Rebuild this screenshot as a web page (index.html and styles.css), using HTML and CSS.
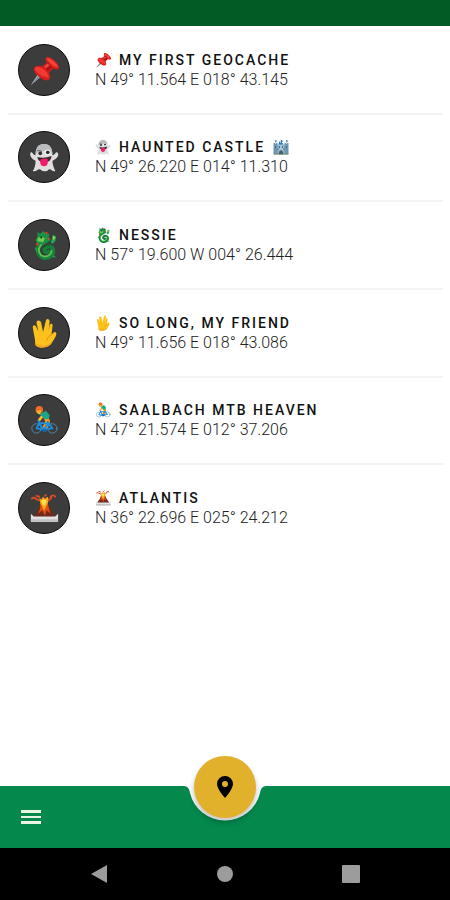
FILE: index.html
```html
<!DOCTYPE html>
<html lang="en">
<head>
<meta charset="utf-8">
<meta name="viewport" content="width=device-width, initial-scale=1">
<title>Geocaches</title>
<link rel="stylesheet" href="styles.css">
</head>
<body>
<svg class="sprite" aria-hidden="true">
    <symbol id="pin" viewBox="0 0 32 32">
        <path d="M10 20L13 23L2 32Z" fill="#b9c1c6"/>
        <path d="M11 21L13 23L2 32Z" fill="#7e888e"/>
        <path d="M5 15C6 11 11 11 14 12L19 8C17 5 17 2 20 2C24 2 32 9 32 13C32 16 29 16 26 14L21 19C23 22 23 26 20 27C15 28 5 20 5 15Z" fill="#d81f1c"/>
        <path d="M19 3C22 3 30 9 31 13C28 14 20 8 19 3Z" fill="#f4443a"/>
        <path d="M6 14C8 12 12 13 15 15C18 17 21 21 21 24C16 24 7 19 6 14Z" fill="#f03a32"/>
        <path d="M15 12L20 8L25 13L20 18C19 15 17 13 15 12Z" fill="#b31217"/>
        <path d="M16 12L20 9L22 11L18 14Z" fill="#ee4a40"/>
    </symbol>
    <symbol id="ghost" viewBox="0 0 32 32">
        <path d="M16 2C22 2 25 6 25 14C28 14 28 10 30 11C33 13 30 18 25 20C25 25 27 28 28 31C25 32 24 29 22 29C20 29 20 32 17 31C14 32 13 29 11 29C9 29 8 32 4 31C6 28 7 25 7 20C2 18 0 13 2 11C4 10 4 14 7 14C7 6 10 2 16 2Z" fill="#dedede"/>
        <path d="M16 2C22 2 25 6 25 13C21 8 12 8 7 13C7 6 10 2 16 2Z" fill="#b9bcbe"/>
        <ellipse cx="12" cy="12" rx="2" ry="2" fill="#303030"/>
        <ellipse cx="20" cy="11" rx="3" ry="3" fill="#fff"/>
        <circle cx="20" cy="11" r="2" fill="#303030"/>
        <path d="M9 9L14 10" stroke="#555" stroke-width="1"/>
        <path d="M9 16Q16 18 24 15C24 19 21 22 16 22C12 22 9 19 9 16Z" fill="#3b2830"/>
        <path d="M12 19Q16 17 20 18V22C20 27 12 27 12 22Z" fill="#f01d6e"/>
    </symbol>
    <symbol id="dragon" viewBox="0 0 32 32">
        <path d="M14 14C8 17 8 24 12 28C16 32 25 30 26 23C26 17 20 16 17 20C15 23 19 25 21 23" fill="none" stroke="#16803a" stroke-width="4" stroke-linecap="round"/>
        <path d="M14 15C9 19 10 24 13 27C17 30 24 27 24 22" fill="none" stroke="#57c24f" stroke-width="2" stroke-linecap="round"/>
        <path d="M9 7L9 2L12 4L15 1L18 4L22 4L21 8L23 11L20 13L15 16L9 14L7 11Z" fill="#159447"/>
        <path d="M9 9Q13 6 17 9L15 13L9 12Z" fill="#72c94d"/>
        <path d="M16 3L20 2L19 5ZM20 8L23 9L20 11ZM8 13L11 15L8 17Z" fill="#e3422e"/>
        <circle cx="13" cy="8" r="1" fill="#1d2b17"/>
        <path d="M23 13L25 8L26 5L29 7L28 12L25 15ZM9 20L6 18L8 24ZM26 27L29 29L25 29Z" fill="#23a351"/>
        <path d="M25 6L28 8L26 11Z" fill="#a2d860"/>
        <path d="M14 19L20 16L22 18" fill="none" stroke="#0c5c2a" stroke-width="1"/>
    </symbol>
    <symbol id="vulcan" viewBox="0 0 32 32">
        <path d="M6 21L4 10C4 7 7 7 8 10L10 14L8 5C8 2 12 2 13 5L15 15L18 3C19 0 22 1 22 4L21 13L22 8C23 5 26 6 25 9L24 18C26 15 28 14 29 16C30 18 26 24 24 27C21 32 10 33 7 29C6 26 7 24 6 21Z" fill="#fcc21b"/>
        <path d="M24 18Q20 19 19 24" fill="none" stroke="#e48c15" stroke-width="1" stroke-linecap="round"/>
        <path d="M7 27C12 31 20 30 25 25C22 33 10 33 7 29Z" fill="#f5a51c"/>
    </symbol>
    <symbol id="cyclist" viewBox="0 0 32 32">
        <g fill="none" stroke-linecap="round" stroke-linejoin="round">
            <circle cx="8" cy="25" r="5" stroke="#4f8db0" stroke-width="1"/>
            <circle cx="25" cy="25" r="5" stroke="#4f8db0" stroke-width="1"/>
            <path d="M18 13L20 18L17 24" stroke="#f79a1d" stroke-width="5"/>
            <path d="M14 12L11 16" stroke="#fbb52e" stroke-width="3"/>
            <path d="M8 25L11 19L21 20L15 26ZM20 18L25 25L16 26M10 17L15 26" stroke="#1c8ce0" stroke-width="2"/>
            <path d="M15 27H18" stroke="#1769aa" stroke-width="3"/>
        </g>
        <path d="M11 10L18 6L22 11L21 15L16 15L14 12Z" fill="#19a887"/>
        <circle cx="11" cy="5" r="4" fill="#ef6c22"/>
        <path d="M8 6L13 5L12 10L9 9Z" fill="#fbb02a"/>
    </symbol>
    <symbol id="volcano" viewBox="0 0 32 32">
        <path d="M12 11L20 11L23 17L29 26H4L10 17Z" fill="#6f2a1e"/>
        <path d="M12 11L20 11L21 16L23 22L19 18L17 24L14 18L10 22L12 16Z" fill="#e2520f"/>
        <path d="M11 5L13 7L15 4L17 6L20 4L21 7L20 11L18 15L16 19L14 14L12 11Z" fill="#ffa71b"/>
        <path d="M13 8L16 7L19 8L17 13H15Z" fill="#ffe34c"/>
        <path d="M3 6Q5 4 7 6L11 8M8 3L11 4M17 3L18 2M21 8L24 5M23 4Q26 1 28 4" fill="none" stroke="#d94a25" stroke-width="2" stroke-linecap="round"/>
        <path d="M2 22L5 25H28L31 22V31H2Z" fill="#e2e2e2"/>
        <path d="M2 28H31V31H2Z" fill="#c2c2c2"/>
    </symbol>
    <symbol id="castle" viewBox="0 0 32 32">
        <path d="M2 11H30V31H2Z" fill="#8fb4cd"/>
        <path d="M1 8H4V10H6V8H9V30H1ZM23 8H26V10H28V8H31V30H23Z" fill="#6f95b0"/>
        <path d="M12 9H20V26H12Z" fill="#a5c6d9"/>
        <path d="M11 11L13 4L16 9L16 2L21 4L17 6L21 11ZM5 2L9 4L5 6ZM27 2L31 4L27 6Z" fill="#1679c9"/>
        <path d="M5 2V9M27 2V9M16 1V9" stroke="#4b7896" stroke-width="1"/>
        <path d="M4 14H6V18H4ZM26 14H28V18H26ZM12 14H14V18H12ZM18 14H20V18H18ZM9 19H11V22H9ZM21 19H23V22H21Z" fill="#426b87"/>
        <path d="M12 31V25Q16 20 20 25V31Z" fill="#4d5f6c"/>
        <path d="M1 29H12V31H1ZM20 29H31V31H20Z" fill="#6d8b6b"/>
    </symbol>
</svg>

<div class="screen">
    <header class="status-bar"></header>

    <main class="content">
        <ul class="cache-list">
            <li class="cache">
                <span class="avatar"><svg class="avatar-icon"><use href="#pin"/></svg></span>
                <div class="info">
                    <h2 class="name"><svg class="emoji"><use href="#pin"/></svg>MY FIRST GEOCACHE</h2>
                    <p class="coords">N 49° 11.564 E 018° 43.145</p>
                </div>
            </li>
            <li class="cache">
                <span class="avatar"><svg class="avatar-icon"><use href="#ghost"/></svg></span>
                <div class="info">
                    <h2 class="name"><svg class="emoji"><use href="#ghost"/></svg>HAUNTED CASTLE<svg class="emoji"><use href="#castle"/></svg></h2>
                    <p class="coords">N 49° 26.220 E 014° 11.310</p>
                </div>
            </li>
            <li class="cache">
                <span class="avatar"><svg class="avatar-icon"><use href="#dragon"/></svg></span>
                <div class="info">
                    <h2 class="name"><svg class="emoji"><use href="#dragon"/></svg>NESSIE</h2>
                    <p class="coords">N 57° 19.600 W 004° 26.444</p>
                </div>
            </li>
            <li class="cache">
                <span class="avatar"><svg class="avatar-icon"><use href="#vulcan"/></svg></span>
                <div class="info">
                    <h2 class="name"><svg class="emoji"><use href="#vulcan"/></svg>SO LONG, MY FRIEND</h2>
                    <p class="coords">N 49° 11.656 E 018° 43.086</p>
                </div>
            </li>
            <li class="cache">
                <span class="avatar"><svg class="avatar-icon"><use href="#cyclist"/></svg></span>
                <div class="info">
                    <h2 class="name"><svg class="emoji"><use href="#cyclist"/></svg>SAALBACH MTB HEAVEN</h2>
                    <p class="coords">N 47° 21.574 E 012° 37.206</p>
                </div>
            </li>
            <li class="cache">
                <span class="avatar"><svg class="avatar-icon"><use href="#volcano"/></svg></span>
                <div class="info">
                    <h2 class="name"><svg class="emoji"><use href="#volcano"/></svg>ATLANTIS</h2>
                    <p class="coords">N 36° 22.696 E 025° 24.212</p>
                </div>
            </li>
        </ul>
    </main>

    <footer class="app-bar">
        <div class="bar-side">
            <button class="menu-btn" type="button" aria-label="Menu">
                <svg width="20" height="14" viewBox="0 0 20 14"><path d="M0 0H20V3H0ZM0 6H20V8H0ZM0 11H20V14H0Z" fill="#e9f4e4"/></svg>
            </button>
        </div>
        <div class="bar-notch">
            <svg class="notch" viewBox="0 0 86 62"><path d="M0 0H2Q7 0 8 7A36 36 0 0 0 78 7Q79 0 84 0H86V62H0Z" fill="#04884c"/></svg>
            <button class="fab" type="button" aria-label="Add location">
                <svg width="16" height="22" viewBox="0 0 16 22"><path fill-rule="evenodd" d="M8 0A8 8 0 0 0 0 8C0 13 8 22 8 22S16 13 16 8A8 8 0 0 0 8 0ZM8 5A3 3 0 1 1 8 11A3 3 0 1 1 8 5Z" fill="#000"/></svg>
            </button>
        </div>
        <div class="bar-side"></div>
    </footer>

    <nav class="system-nav">
        <button class="nav-btn" type="button" aria-label="Back">
            <svg width="18" height="18" viewBox="0 0 18 18"><path d="M17 0V18L1 9Z" fill="#9c9c9c"/></svg>
        </button>
        <button class="nav-btn" type="button" aria-label="Home">
            <svg width="18" height="18" viewBox="0 0 18 18"><circle cx="9" cy="9" r="8" fill="#9c9c9c"/></svg>
        </button>
        <button class="nav-btn" type="button" aria-label="Recent apps">
            <svg width="18" height="18" viewBox="0 0 18 18"><rect width="18" height="18" rx="1" fill="#9c9c9c"/></svg>
        </button>
    </nav>
</div>
</body>
</html>
```
FILE: styles.css
```css
* {
    margin: 0;
    padding: 0;
    box-sizing: border-box;
}

body {
    background: #fff;
    font-family: Roboto, "Liberation Sans", sans-serif;
    color: #111;
}

button {
    border: none;
    background: none;
    cursor: pointer;
}

svg {
    display: block;
}

.sprite {
    position: absolute;
    width: 0;
    height: 0;
}

.screen {
    display: flex;
    flex-direction: column;
    min-height: 100vh;
}

.status-bar {
    height: 26px;
    background: #025a25;
}

.content {
    flex: 1;
    padding-top: 1px;
}

/* list */
.cache-list {
    display: grid;
    grid-auto-rows: 1fr;
    min-height: 526px;
    padding: 0 7px 0 8px;
    list-style: none;
}

.cache {
    display: flex;
    align-items: center;
    gap: 25px;
    padding-left: 10px;
    border-bottom: 2px solid #f3f3f3;
}

.cache:last-child {
    border-bottom-color: transparent;
}

.avatar {
    display: flex;
    align-items: center;
    justify-content: center;
    width: 52px;
    height: 52px;
    border: 1px solid #0c0c0c;
    border-radius: 50%;
    background: #3c3c3c;
}

.avatar-icon {
    width: 30px;
    height: 30px;
}

.name {
    display: flex;
    align-items: center;
    gap: 8px;
    font-size: 14px;
    font-weight: 500;
    line-height: 20px;
    letter-spacing: 2px;
}

.emoji {
    width: 16px;
    height: 16px;
}

.coords {
    font-size: 16px;
    font-weight: 300;
    line-height: 20px;
    color: #222;
}

/* bottom bar */
.app-bar {
    display: grid;
    grid-template-columns: 1fr 86px 1fr;
    height: 62px;
}

.bar-side {
    display: flex;
    align-items: center;
    padding-left: 21px;
    background: #04884c;
}

.bar-notch {
    position: relative;
}

.notch {
    width: 86px;
    height: 62px;
}

.fab {
    position: absolute;
    top: -30px;
    left: 12px;
    display: flex;
    align-items: center;
    justify-content: center;
    width: 62px;
    height: 62px;
    border-radius: 50%;
    background: #e2b12c;
    box-shadow: 0 4px 5px 1px rgba(0, 0, 0, 0.2);
}

.system-nav {
    display: flex;
    align-items: center;
    justify-content: space-between;
    height: 52px;
    padding: 0 90px;
    background: #000;
}
```
